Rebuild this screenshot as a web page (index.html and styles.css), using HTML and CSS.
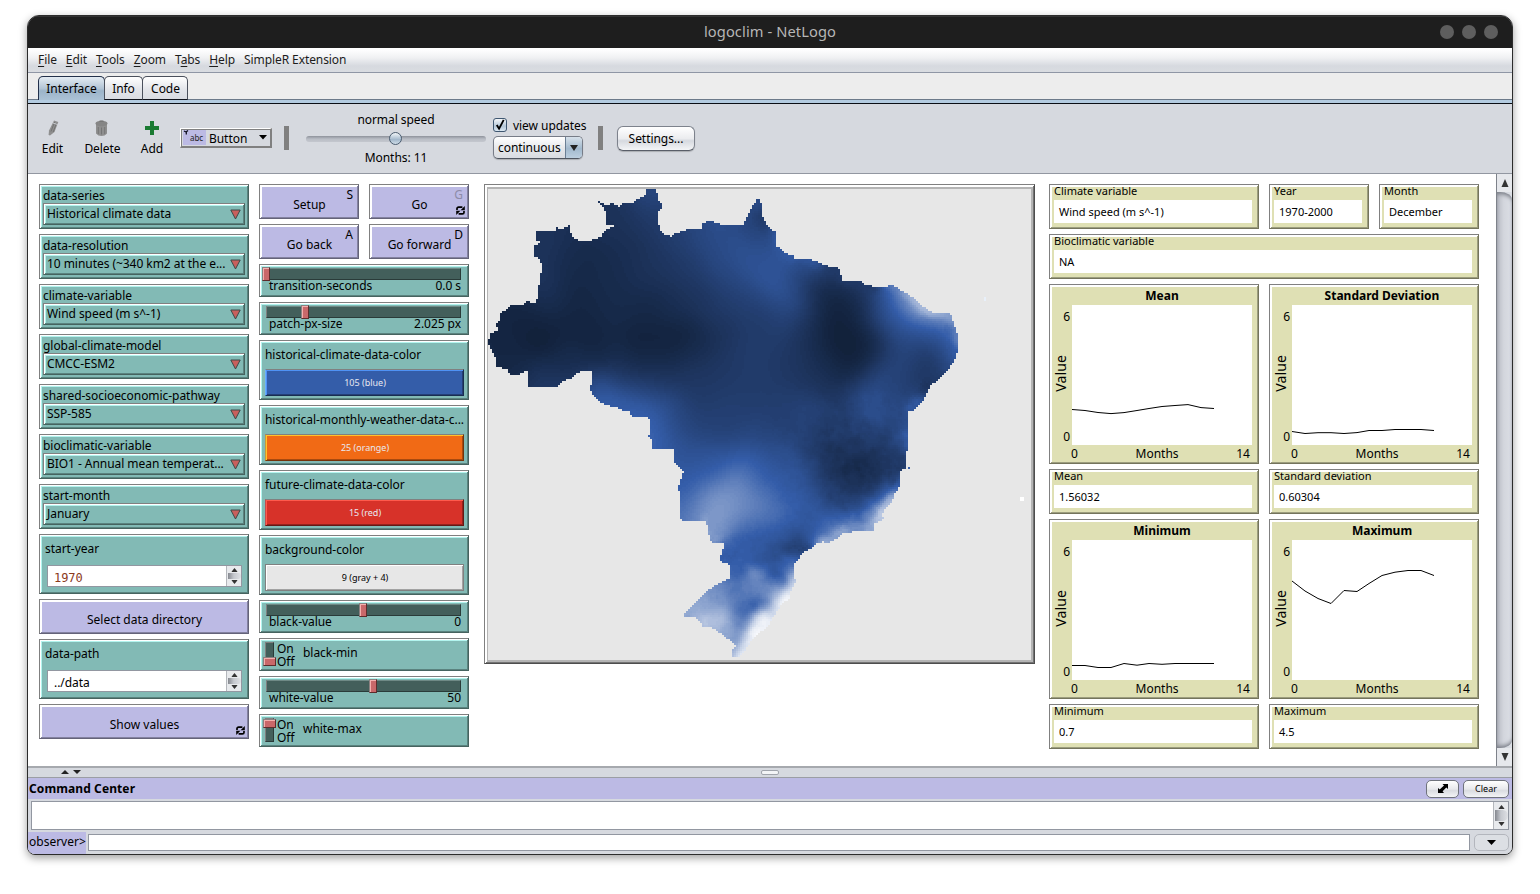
FILE: index.html
```html
<!DOCTYPE html>
<html lang="en">
<head>
<meta charset="utf-8">
<title>logoclim - NetLogo</title>
<link rel="stylesheet" href="styles.css">
</head>
<body>
<svg width="0" height="0" class="defs">
  <symbol id="forever" viewBox="0 0 9 9">
    <path d="M1 4V2.6Q1 1.2 2.6 1.2H6.4M8 5V6.4Q8 7.8 6.4 7.8H2.6" fill="none" stroke="#000" stroke-width="1.7"/>
    <path d="M8.8 0V4.2H4.6ZM.2 9V4.8H4.4Z" fill="#000"/>
  </symbol>
  <symbol id="tri" viewBox="0 0 11 11"><path d="M.8 1H10.2L5.5 10Z" fill="#c95f5c" stroke="#3c4a48" stroke-width="1"/></symbol>
  <symbol id="up" viewBox="0 0 8 5"><path d="M0 5H8L4 0Z" fill="#333"/></symbol>
  <symbol id="down" viewBox="0 0 8 5"><path d="M0 0H8L4 5Z" fill="#333"/></symbol>
</svg>
<div class="window">
  <header class="titlebar">
    <span class="title">logoclim - NetLogo</span>
    <div class="dots"><i></i><i></i><i></i></div>
  </header>
  <nav class="menubar">
    <span><u>F</u>ile</span><span><u>E</u>dit</span><span><u>T</u>ools</span><span><u>Z</u>oom</span><span>T<u>a</u>bs</span><span><u>H</u>elp</span><span>SimpleR Extension</span>
  </nav>
  <div class="tabs"><span class="tab active">Interface</span><span class="tab t-info">Info</span><span class="tab t-code">Code</span></div>
  <div class="tabline"></div>
  <div class="toolbar">
    <div class="tool tool-edit">
      <svg width="16" height="18" viewBox="0 0 16 18"><path d="M9 1.500 13.300 3 9.500 13 5 16.500 3.600 16 4 11.500Z" fill="#8f8f8f"/><path d="M9.600 3 6 12.500M11.500 4 8.200 13" stroke="#737373" stroke-width="1" fill="none"/><path d="M8 4 12.600 5.500" stroke="#d6d9df" stroke-width=".8"/></svg>
      <span>Edit</span>
    </div>
    <div class="tool tool-delete">
      <svg width="18" height="18" viewBox="0 0 18 18"><path d="M2 5H13V14.500Q11 17 7.500 17T2 14.500Z" fill="#8f8f8f"/><ellipse cx="7.500" cy="4.500" rx="6" ry="2.700" fill="#858585"/><path d="M5.500 1.500H9.500V3H5.500Z" fill="#777"/><path d="M4.300 8V15M7.500 8.500V15.500M10.700 8V15" stroke="#757575" fill="none"/></svg>
      <span>Delete</span>
    </div>
    <div class="tool tool-add">
      <svg width="16" height="18" viewBox="0 0 16 18"><path d="M6 2H10V7H15V11H10V16H6V11H1V7H6Z" fill="#1a7a32"/></svg>
      <span>Add</span>
    </div>
    <div class="picker">
      <span class="chip"><svg width="7" height="5" viewBox="0 0 7 5"><path d="M1 1 3 2 5 .5M3.300 2V4.500" stroke="#112" stroke-width="1.300" fill="none"/></svg>abc</span>
      <span class="pick-name">Button</span>
      <svg class="pick-arrow" width="8" height="5" viewBox="0 0 8 5"><path d="M0 0H8L4 4.500Z" fill="#000"/></svg>
    </div>
    <div class="sep sep1"></div>
    <div class="speed">
      <span>normal speed</span>
      <div class="speed-track"><i></i></div>
      <span class="ticks">Months: 11</span>
    </div>
    <div class="updates">
      <div class="check-row"><span class="check"><svg width="12" height="12" viewBox="0 0 13 13"><path d="M3 6.500 5.500 10.500 10.500 1" fill="none" stroke="#000" stroke-width="2"/></svg></span><span>view updates</span></div>
      <div class="combo"><span>continuous</span><span class="combo-btn"><svg width="8" height="6" viewBox="0 0 8 5" preserveAspectRatio="none"><path d="M0 0H8L4 5Z" fill="#222"/></svg></span></div>
    </div>
    <div class="sep sep2"></div>
    <div class="settings">Settings...</div>
  </div>

  <main class="stage">
    <div class="col col-a">
      <div class="w teal chooser"><label>data-series</label><div class="select">Historical climate data<svg width="11" height="11"><use href="#tri"/></svg></div></div>
      <div class="w teal chooser"><label>data-resolution</label><div class="select">10 minutes (~340 km2 at the e...<svg width="11" height="11"><use href="#tri"/></svg></div></div>
      <div class="w teal chooser"><label>climate-variable</label><div class="select">Wind speed (m s^-1)<svg width="11" height="11"><use href="#tri"/></svg></div></div>
      <div class="w teal chooser"><label>global-climate-model</label><div class="select">CMCC-ESM2<svg width="11" height="11"><use href="#tri"/></svg></div></div>
      <div class="w teal chooser"><label>shared-socioeconomic-pathway</label><div class="select">SSP-585<svg width="11" height="11"><use href="#tri"/></svg></div></div>
      <div class="w teal chooser"><label>bioclimatic-variable</label><div class="select">BIO1 - Annual mean temperat...<svg width="11" height="11"><use href="#tri"/></svg></div></div>
      <div class="w teal chooser"><label>start-month</label><div class="select">January<svg width="11" height="11"><use href="#tri"/></svg></div></div>
      <div class="w teal input"><label>start-year</label><div class="field"><span class="num">1970</span><span class="mini"><svg width="7" height="4" viewBox="0 0 8 5"><use href="#up"/></svg><b></b><svg width="7" height="4" viewBox="0 0 8 5"><use href="#down"/></svg></span></div></div>
      <div class="w lilac button">Select data directory</div>
      <div class="w teal input"><label>data-path</label><div class="field"><span>../data</span><span class="mini"><svg width="7" height="4" viewBox="0 0 8 5"><use href="#up"/></svg><b></b><svg width="7" height="4" viewBox="0 0 8 5"><use href="#down"/></svg></span></div></div>
      <div class="w lilac button">Show values<svg class="loop" width="9" height="9"><use href="#forever"/></svg></div>
    </div>

    <div class="col col-b">
      <div class="pair">
        <div class="w lilac button">Setup<b class="key">S</b></div>
        <div class="w lilac button">Go<b class="key dim">G</b><svg class="loop" width="9" height="9"><use href="#forever"/></svg></div>
      </div>
      <div class="pair">
        <div class="w lilac button">Go back<b class="key">A</b></div>
        <div class="w lilac button">Go forward<b class="key">D</b></div>
      </div>
      <div class="w teal slider"><div class="track"><i style="left:-5px"></i></div><div class="sl"><span>transition-seconds</span><span>0.0 s</span></div></div>
      <div class="w teal slider"><div class="track"><i style="left:34px"></i></div><div class="sl"><span>patch-px-size</span><span>2.025 px</span></div></div>
      <div class="w teal color"><label>historical-climate-data-color</label><div class="swatch blue">105 (blue)</div></div>
      <div class="w teal color"><label>historical-monthly-weather-data-c...</label><div class="swatch orange">25 (orange)</div></div>
      <div class="w teal color"><label>future-climate-data-color</label><div class="swatch red">15 (red)</div></div>
      <div class="w teal color"><label>background-color</label><div class="swatch gray">9 (gray + 4)</div></div>
      <div class="w teal slider"><div class="track"><i style="left:92px"></i></div><div class="sl"><span>black-value</span><span>0</span></div></div>
      <div class="w teal switch off"><div class="chan"><i></i></div><div class="onoff"><span>On</span><span>Off</span></div><span class="name">black-min</span></div>
      <div class="w teal slider"><div class="track"><i style="left:102px"></i></div><div class="sl"><span>white-value</span><span>50</span></div></div>
      <div class="w teal switch"><div class="chan"><i></i></div><div class="onoff"><span>On</span><span>Off</span></div><span class="name">white-max</span></div>
    </div>

    <div class="view"><div class="world"><canvas id="world" width="272" height="236"></canvas></div></div>

    <div class="col col-c">
      <div class="grid3">
        <div class="w sand monitor"><label>Climate variable</label><div class="val">Wind speed (m s^-1)</div></div>
        <div class="w sand monitor"><label>Year</label><div class="val">1970-2000</div></div>
        <div class="w sand monitor"><label>Month</label><div class="val">December</div></div>
      </div>
      <div class="w sand monitor"><label>Bioclimatic variable</label><div class="val">NA</div></div>
      <div class="grid2">
        <div class="w sand plot"><h4>Mean</h4><div class="yax"><span>6</span><em>Value</em><span>0</span></div><svg class="area" width="180" height="140"><polyline points="0,104.500 13,105.500 26,107.500 39,108.600 52,107.600 65,105.500 77,103.500 90,101.500 103,100.500 116,99.600 129,102.600 142,103.500"/></svg><div class="xax"><span>0</span><span>Months</span><span>14</span></div></div>
        <div class="w sand plot"><h4>Standard Deviation</h4><div class="yax"><span>6</span><em>Value</em><span>0</span></div><svg class="area" width="180" height="140"><polyline points="0,126.500 13,128.500 26,127.700 39,127.700 52,128.500 65,127.600 77,125.500 90,125.500 103,124.500 116,124.500 129,124.500 142,125.500"/></svg><div class="xax"><span>0</span><span>Months</span><span>14</span></div></div>
      </div>
      <div class="grid2">
        <div class="w sand monitor"><label>Mean</label><div class="val">1.56032</div></div>
        <div class="w sand monitor"><label>Standard deviation</label><div class="val">0.60304</div></div>
      </div>
      <div class="grid2">
        <div class="w sand plot"><h4>Minimum</h4><div class="yax"><span>6</span><em>Value</em><span>0</span></div><svg class="area" width="180" height="140"><polyline points="0,125.500 13,125.500 26,127.500 39,127.500 52,123.500 65,125.200 77,123.500 90,124.300 103,123.500 116,123.500 129,123.500 142,123.500"/></svg><div class="xax"><span>0</span><span>Months</span><span>14</span></div></div>
        <div class="w sand plot"><h4>Maximum</h4><div class="yax"><span>6</span><em>Value</em><span>0</span></div><svg class="area" width="180" height="140"><polyline points="0,41 13,51 26,58.500 39,63.500 52,50.500 65,51.500 77,43.500 90,35.500 103,32.200 116,30.500 129,30.500 142,35.500"/></svg><div class="xax"><span>0</span><span>Months</span><span>14</span></div></div>
      </div>
      <div class="grid2">
        <div class="w sand monitor"><label>Minimum</label><div class="val">0.7</div></div>
        <div class="w sand monitor"><label>Maximum</label><div class="val">4.5</div></div>
      </div>
    </div>

    <div class="vscroll">
      <span class="vs-btn"><svg width="8" height="8" viewBox="0 0 8 8"><path d="M.5 8H7.500L4 0Z" fill="#333"/></svg></span>
      <span class="vs-thumb"></span>
      <span class="vs-btn"><svg width="8" height="8" viewBox="0 0 8 8"><path d="M.5 0H7.500L4 8Z" fill="#333"/></svg></span>
    </div>
  </main>

  <div class="splitter"><svg width="8" height="4" viewBox="0 0 8 5" preserveAspectRatio="none"><path d="M0 5H8L4 0Z" fill="#222"/></svg><svg width="8" height="4" viewBox="0 0 8 5" preserveAspectRatio="none"><path d="M0 0H8L4 5Z" fill="#222"/></svg><i></i></div>
  <section class="cc">
    <div class="cc-head"><strong>Command Center</strong>
      <span class="pill p-icon"><svg width="10" height="9" viewBox="0 0 10 9"><path d="M4.500 0H10V5L8.300 3.600 4.600 7.300 6 9H0V4L1.700 5.400 6 1.500Z" fill="#000"/></svg></span>
      <span class="pill p-clear">Clear</span>
    </div>
    <div class="out"><span class="mini tall"><svg width="7" height="4" viewBox="0 0 8 5"><use href="#up"/></svg><b></b><svg width="7" height="4" viewBox="0 0 8 5"><use href="#down"/></svg></span></div>
    <div class="prompt"><span class="who">observer&gt;</span><span class="line"></span><span class="hist"><svg width="9" height="5" viewBox="0 0 9 5"><path d="M0 0H9L4.500 5Z" fill="#000"/></svg></span></div>
  </section>
</div>
<script src="world.js"></script>
</body>
</html>
```

FILE: styles.css
```css
* { box-sizing: border-box; }
body { margin: 0; background: #fff; font-family: "Noto Sans", sans-serif; font-size: 12px; line-height: 16px; letter-spacing: -.05px; color: #000; height: 894px; overflow: hidden; }
.defs { position: absolute; }
i, em, b { font-style: normal; font-weight: normal; }
svg { display: block; }

.window { width: 1486px; height: 840px; margin: 15px 0 0 27px; border: 1px solid #2c2c2c; border-radius: 12px 12px 8px 8px; background: #d6d9df; overflow: hidden; display: flex; flex-direction: column; box-shadow: 0 3px 9px rgba(0,0,0,.38); }
.titlebar { height: 32px; flex: none; background: #1e1e1e; display: flex; align-items: center; justify-content: center; position: relative; padding-bottom: 2px; box-shadow: inset 0 1px #333; }
.title { color: #b6b6b6; font-size: 14.67px; letter-spacing: .1px; }
.dots { position: absolute; right: 14px; top: 9px; display: flex; gap: 8px; }
.dots i { width: 14px; height: 14px; border-radius: 50%; background: #5e5e5e; }

.menubar { height: 25px; flex: none; display: flex; gap: 9px; padding: 4px 0 0 10px; background: linear-gradient(#fff 5%, #f0f1f3 40%, #d6d9df 75%, #d9dce1); border-bottom: 1px solid #8f96a5; color: #1c1c1c; letter-spacing: -.09px; }
.menubar u { text-decoration: underline; text-underline-offset: 2px; }
.tabs { height: 26px; flex: none; background: #ededed; display: flex; padding: 3px 0 0 10px; }
.tab { height: 24px; border: 1px solid #4a505c; border-bottom-color: #10131c; border-radius: 5px 5px 0 0; background: linear-gradient(#fff, #e3e5ea 55%, #d9dce2); text-align: center; line-height: 24px; margin-right: -1px; position: relative; width: 40px; }
.tab.active { width: 67px; background: linear-gradient(#e4ecf3, #b2c4d5 50%, #9cb4c9 60%, #abc2d6); border-color: #22304a; border-bottom: 0; }
.t-info { width: 39px; }
.t-code { width: 46px; padding-left: 1px; }
.tabline { height: 5px; flex: none; background: #b3cbe0; border-top: 1px solid #6c7a8a; border-bottom: 1px solid #0a0d14; }

.toolbar { height: 70px; flex: none; background: #d6d9df; border-bottom: 1px solid #9297a1; display: flex; align-items: flex-start; padding: 0 0 0 3px; margin-bottom: -1px; }
.tool { display: flex; flex-direction: column; align-items: center; padding-top: 15px; gap: 4px; }
.tool-edit { width: 43px; }
.tool-delete { width: 57px; }
.tool-add { width: 42px; }
.picker { margin: 24px 0 0 7px; width: 92px; height: 20px; border: 1px solid #fff; border-bottom: 2px solid #808080; border-right: 2px solid #808080; box-shadow: inset 1px 1px #808080; display: flex; align-items: center; padding-left: 2px; gap: 3px; }
.pick-name { padding-top: 2px; }
.chip { width: 23px; height: 15px; background: #bcbae4; font-size: 8px; line-height: 16px; padding-left: 7px; position: relative; color: #222; }
.chip svg { position: absolute; left: 0; top: 0; }
.pick-arrow { margin-left: 9px; }
.sep { width: 5px; height: 24px; background: #808080; margin-top: 22px; }
.sep1 { margin-left: 12px; }
.sep2 { margin-left: 15px; }
.speed { width: 180px; margin: 8px 0 0 17px; display: flex; flex-direction: column; align-items: center; }
.speed-track { width: 180px; height: 6px; border-radius: 3px; background: linear-gradient(#8e929b, #b9bdc5 50%, #c4c7ce); margin: 8px 0; position: relative; }
.speed-track i { position: absolute; left: 83px; top: -4px; width: 13px; height: 13px; border-radius: 50%; border: 1px solid #4a5c70; background: linear-gradient(#f2f6f9, #a3b8cc 60%, #d0dde8); }
.updates { margin: 14px 0 0 7px; width: 90px; }
.check-row { display: flex; gap: 6px; height: 14px; line-height: 16px; white-space: nowrap; }
.check { width: 14px; height: 14px; border: 1px solid #3e5670; border-radius: 3px; background: linear-gradient(#f6f8fa, #b4c7d8 60%, #dce8f2); flex: none; }
.combo { margin-top: 4px; width: 90px; height: 23px; border: 1px solid #777c87; border-bottom-color: #4f555f; border-radius: 5px; background: linear-gradient(#fff, #e7e9ec 50%, #d9dce1); display: flex; overflow: hidden; line-height: 22px; padding-left: 4px; box-shadow: 0 1px 1px rgba(0,0,0,.2); }
.combo-btn { margin-left: auto; width: 17px; background: linear-gradient(#d6e1ea, #a2b9cd 55%, #bccfdf); border-left: 1px solid #6b7f94; display: flex; align-items: center; justify-content: center; }
.settings { margin: 22px 0 0 14px; width: 78px; height: 25px; border: 1px solid #7d828c; border-bottom-color: #595e68; border-radius: 6px; background: linear-gradient(#fff, #ebecef 50%, #d6d9df 60%, #f4f5f7); text-align: center; line-height: 24px; box-shadow: 0 1px 1px rgba(0,0,0,.2); }

.stage { height: 593px; flex: none; background: #fff; display: flex; align-items: flex-start; padding-left: 11px; border-top: 1px solid #9297a1; }
.col { display: flex; flex-direction: column; gap: 5px; padding-top: 10px; flex: none; }
.col-a, .col-b { width: 210px; }
.col-b { margin-left: 10px; }
.col-c { width: 430px; margin-left: 14px; }
.pair, .grid3, .grid2 { display: grid; gap: 10px; grid-template-columns: 1fr 1fr; }
.grid3 { grid-template-columns: 210px 100px 100px; }

.w { border: 1px solid; position: relative; white-space: nowrap; }
.w label { display: block; }
.teal { background: #82bab5; border-color: #808080 #46635f #46635f #808080; box-shadow: inset 1px 1px #fff, inset -1px -1px #5b837f, inset 2px 2px #b2f4ee; }
.lilac { background: #bcbae4; border-color: #808080 #646379 #646379 #808080; box-shadow: inset 1px 1px #fff, inset -1px -1px #8382a0, inset 2px 2px #fff; }
.sand { background: #dfe0b4; border-color: #808080 #74745c #74745c #808080; box-shadow: inset 1px 1px #fff, inset -1px -1px #9c9d7e, inset 2px 2px #fff; }

.chooser { height: 45px; padding: 3px 3px 0; }
.chooser label { height: 15px; line-height: 16px; }
.select { height: 22px; border: 1px solid; border-color: #808080 #46635f #46635f #808080; box-shadow: inset 1px 1px #fff, inset -1px -1px #5b837f, inset 2px 2px #b2f4ee; line-height: 20px; padding-left: 3px; position: relative; }
.select svg { position: absolute; right: 3px; top: 5px; }
.input { height: 60px; padding: 6px 6px 0 7px; }
.input label { margin-left: -2px; height: 24px; }
.field { height: 22px; width: 195px; border: 1px solid #9297a1; background: #fff; display: flex; line-height: 24px; padding-left: 6px; }
.num { font-family: "DejaVu Sans Mono", monospace; color: #8b3a1c; }
.mini { margin-left: auto; width: 15px; display: flex; flex-direction: column; justify-content: space-between; align-items: center; padding: 2px 0 2px; background: #e8eaed; border-left: 1px solid #b4b7bc; }
.mini b { width: 13px; flex: 1; margin: 1px 0; border-radius: 0 6px 6px 0; background: linear-gradient(90deg, #85888f, #c6c9cf 45%, #dfe1e5); }
.button { height: 35px; text-align: center; line-height: 40px; padding-left: 1px; letter-spacing: 0; }
.key { position: absolute; right: 5px; top: 2px; line-height: 16px; }
.dim { color: #8d8ca8; }
.loop { position: absolute; right: 3px; bottom: 3px; }
.slider { height: 33px; padding: 3px 6px 0; }
.track { height: 12px; width: 195px; background: #435f5b; border: 1px solid; border-color: #6f8a86 #2a3b39 #2a3b39 #808080; position: relative; }
.track i { position: absolute; top: -2px; width: 8px; height: 14px; }
.track i, .chan i { background: #c9686a; border: 1px solid; border-color: #8a8080 #5e2c2c #5e2c2c #8a8080; box-shadow: inset 1px 1px #f3b0ae; }
.sl { display: flex; justify-content: space-between; padding: 0 1px 0 3px; line-height: 16px; margin-top: -2px; }
.color { height: 60px; padding: 6px 4px 0 5px; }
.color label { height: 22px; }
.swatch { height: 27px; width: 199px; border: 1px solid; font-size: 9px; color: #e8e8f0; text-align: center; line-height: 26px; letter-spacing: 0; padding-left: 1px; }
.blue { background: #345da9; border-color: #808080 #182c50 #182c50 #6ab0ff; box-shadow: inset 1px 1px #4f92f5, inset -1px -1px #243f75; }
.orange { background: #f16a15; border-color: #808080 #74330a #74330a #c79a3a; box-shadow: inset 1px 1px #ffc32c, inset -1px -1px #a84a0f; }
.red { background: #d73229; border-color: #808080 #651814 #651814 #c05050; box-shadow: inset 1px 1px #ff5a4c, inset -1px -1px #95231d; }
.gray { background: #e7e7e7; border-color: #808080 #808080 #808080 #808080; color: #000; box-shadow: inset 1px 1px #fff, inset -1px -1px #a2a2a2; }
.switch { height: 33px; display: flex; padding-left: 5px; }
.chan { width: 9px; height: 24px; margin-top: 3px; background: #435f5b; border: 1px solid; border-color: #808080 #2a3b39 #2a3b39 #808080; position: relative; }
.chan i { position: absolute; left: -3px; width: 13px; height: 9px; top: 0; }
.off .chan i { top: 14px; }
.onoff { display: flex; flex-direction: column; margin-left: 3px; width: 26px; line-height: 13px; padding-top: 3px; letter-spacing: 0; }
.name { line-height: 28px; }

.view { margin: 10px 0 0 15px; width: 551px; height: 480px; border: 1px solid; border-color: #808080 #4d4d4d #4d4d4d #808080; box-shadow: inset 1px 1px #fff, inset -1px -1px #737373, inset 2px 2px #fff; padding: 2px 2px; flex: none; }
.world { width: 546px; height: 475px; border: 2px solid #b4b4b4; border-left-width: 1px; background: #e7e7e7; overflow: hidden; }
.world canvas { display: block; width: 544px; height: 472px; image-rendering: pixelated; }

.monitor { height: 45px; padding: 0 4px; font-size: 11px; letter-spacing: 0; }
.monitor label { height: 15px; line-height: 12px; }
.val { background: #fff; height: 23px; margin-right: 2px; line-height: 23px; padding-left: 5px; }
.plot { height: 180px; display: grid; grid-template: 20px 140px 1fr / 22px 180px; }
.plot h4 { margin: 0; grid-column: 2; text-align: center; font-size: 12px; line-height: 21px; font-weight: bold; letter-spacing: 0; }
.yax { position: relative; display: flex; flex-direction: column; justify-content: space-between; align-items: flex-end; padding: 4px 2px 0 0; }
.yax em { writing-mode: vertical-rl; transform: rotate(180deg); position: absolute; left: 3px; top: 50px; font-size: 14px; letter-spacing: .1px; }
.area { background: #fff; }
.area polyline { fill: none; stroke: #000; stroke-width: 1; }
.xax { grid-column: 2; display: flex; justify-content: space-between; padding: 1px 2px 0 0; line-height: 16px; margin-left: -1px; letter-spacing: 0; }

.vscroll { margin-left: 17px; width: 16px; height: 592px; border-left: 1px solid #7e828a; background: linear-gradient(90deg, #b4b7be, #d3d6dd 50%, #dde0e6); display: flex; flex-direction: column; }
.vs-btn { height: 18px; background: #e6e8ec; display: flex; align-items: center; justify-content: center; flex: none; }
.vs-thumb { flex: 1; border-radius: 0 12px 12px 0 / 0 8px 8px 0; box-shadow: inset 0 4px 4px -2px #777b84, inset 0 -4px 4px -2px #777b84; background: linear-gradient(90deg, #b8bbc3, #d3d6dd 45%, #dcdfe5); }

.splitter { height: 12px; flex: none; background: #d6d9df; border-top: 2px solid #a6a9ae; border-bottom: 1px solid #9b9ea4; display: flex; gap: 4px; padding: 2px 0 0 33px; position: relative; }
.splitter i { width: 18px; height: 5px; border: 1px solid #a0a4ac; border-radius: 2px; background: #f3f4f6; margin-left: 676px; }
.cc { flex: 1; display: flex; flex-direction: column; background: #d6d9df; }
.cc-head { height: 21px; background: #bcbae4; display: flex; align-items: center; padding: 0 3px 0 1px; flex: none; }
.cc-head strong { margin-right: auto; letter-spacing: .1px; }
.pill { height: 18px; border: 1px solid #6f737c; border-radius: 5px; background: linear-gradient(#fff, #e8e9ec 50%, #dadce1 60%, #f3f4f6); display: flex; align-items: center; justify-content: center; font-size: 9px; letter-spacing: 0; }
.p-icon { width: 33px; margin-right: 4px; }
.p-clear { width: 46px; }
.out { height: 29px; flex: none; margin: 2px 3px 0; background: #fff; border: 1px solid #9297a1; display: flex; }
.tall { padding: 3px 0; }
.prompt { display: flex; padding-top: 3px; flex: 1; }
.who { width: 58px; height: 22px; margin-top: -1px; background: #bcbae4; line-height: 20px; padding-left: 1px; letter-spacing: 0; }
.line { width: 1382px; height: 17px; margin: 1px 0 0 2px; background: #fff; border: 1px solid #9297a1; }
.hist { width: 35px; height: 17px; margin: 1px 0 0 4px; border: 1px solid #b3b6bd; border-radius: 5px; background: #dcdfe4; display: flex; align-items: center; justify-content: center; }
```

FILE: world.js
```js
// Patch grid: each patch is 2px, the world origin sits at (488, 189).
const OX = 488, OY = 189, CELL = 2, COLS = 272, ROWS = 236;

const outline = [
646,189,656,189,658,195,658,200,661.5,203,661,210,658.5,212,658.5,223,661,230,662.5,232.5,666.5,235,671.5,236.5,674.5,234,
681.5,231.5,690.5,228,701.5,228.5,702.5,222.5,710,221.5,717.5,222.5,721.5,224.5,730,224.5,743.5,224.5,745.5,219.5,748.5,213.5,
751.5,207.5,755,202.5,756.5,199,759.5,200,762,205,763,216,765,220,767,224.5,772,230,776.5,231.5,776.5,241.5,775,246.5,782,248.5,
784,253,794,255,795.5,260.5,798.5,259,808.5,259,816.5,261.5,823.5,264.5,830,267,837.5,268,840,270.5,842.5,280,849,280.5,861.5,281.5,
865,285,875,286.5,886.5,287,887.5,285.5,895,286,900,289.5,906.5,293.5,913.5,298,921.5,305,932.5,312.5,934,313.5,950,313.5,951.5,316.5,
954,323.5,956,330,958.5,336,958.5,346.5,956.5,355,953.5,363,946.5,371,938.5,380,931.5,385,927.5,393,925,398,920,404,914.5,410,
909,410.5,909,425,907.5,433,909,436,909,448,906.5,452,906,465,905,469,900,471.5,899,488,895,494,891.5,501.5,886.5,507.5,881.5,515,
884,519,875,523,873,531,863.5,530.5,855,531.5,843,534,835,540,826.5,543,823.5,541,816.5,544,810,549,802.5,553,800,557,793.5,564,
793,577,796,581,793,587,790.5,593,790,599,783.5,601.5,776.5,612,771.5,620,766,629,760,632.5,751.5,640,746.5,648.5,740,656,
732.5,657.5,732.5,650,735.5,646.5,731.5,641,726.5,638,721.5,633,716.5,631,710,626.5,702.5,627.5,700.5,621.5,693.5,616.5,684,617.5,
684.5,614,693.5,605,701.5,596.5,710,589,718.5,583.5,730,578,730,565.5,727.5,562.5,723.5,563.5,720.5,561.5,720.5,556,722.5,554,
723.5,543.5,713,543,710,540.5,708,530,706.5,522,685,521.5,679,519,680,501.5,678.5,486.5,681,478.5,683.5,470.5,676.5,464.5,674,461.5,
674,450,652.5,450,651.5,440,648.5,436,651,432.5,650,418.5,643.5,417,631.5,416,629.5,412,623.5,410.5,613.5,406.5,605,405,598.5,400.5,
593.5,395,590.5,390,591.5,381.5,591.5,371.5,583.5,371,575.5,374,570,379,561.5,381.5,557.5,387,546,386.5,528.5,387,528,370,519.5,374,
510,374.5,507.5,369.5,496.5,366,495,356.5,491.5,350.5,488,343.5,490,333.5,497.5,331,496.5,323.5,500,320,500,313.5,506,310,511.5,305.5,
524.5,304.5,526.5,301.5,535.5,302.5,538.5,295,539,285.5,540.5,275,542.5,268.5,540.5,260,535,256.5,534.5,245.5,543.5,242.5,536,241,
536,231,556,230.5,556.5,227.5,561.5,229,569.5,225.5,570,230.5,572.5,236.5,580,242,591.5,240.5,600,237.5,606.5,229.5,614,226,606,224.5,
606,213.5,604,207.5,598.5,203.5,599,201,605,204.5,613.5,203.5,619.5,206.5,622.5,203.5,633.5,202.5,640,197.5,646,195];

// Wind samples: x, y, shade (0 black, 1 base blue, 2 white).
const samples = [
650,195,.75,650,215,.6,620,212,.52,612,230,.5,590,260,.42,560,260,.46,545,250,.54,545,280,.54,548,300,.48,575,285,.4,580,310,.38,
560,325,.37,530,320,.36,505,330,.37,540,340,.3,500,350,.38,493,345,.4,515,365,.4,540,380,.55,555,384,.62,560,370,.44,580,365,.48,
600,360,.4,590,340,.35,640,340,.34,670,340,.34,690,335,.38,650,310,.4,620,290,.44,605,260,.44,630,250,.49,640,280,.5,620,305,.43,
660,260,.55,680,240,.65,690,270,.6,700,300,.54,670,300,.48,700,235,.75,715,230,.82,720,260,.78,740,235,.82,745,250,.88,750,270,.88,
730,285,.7,770,280,.92,780,285,.92,790,300,.82,785,320,.7,760,215,.62,755,205,.8,758,225,.62,765,240,.72,775,240,.95,770,262,.88,
790,256,.95,800,275,.65,810,262,.9,820,290,.42,840,295,.33,835,270,.6,845,283,.6,870,292,.6,860,305,.42,840,320,.32,840,340,.3,860,340,.32,
830,330,.34,850,355,.31,875,340,.42,855,365,.37,840,380,.42,820,350,.42,805,330,.52,800,360,.55,815,375,.5,885,300,.85,895,288,1.2,900,305,1.05,
905,310,1.1,915,300,1.6,908,295,1.5,923,307,1.6,930,312,1.6,942,314,1.5,950,315,1.4,925,325,.9,940,330,.85,945,345,.8,957,340,1.25,
955,355,.95,900,330,.85,890,320,.85,910,345,.72,930,360,.5,945,365,.75,935,375,.6,905,370,.7,920,385,.5,900,395,.6,918,403,.9,
910,405,.95,890,380,.75,880,395,.85,870,395,.78,875,410,.97,865,400,.85,895,410,.65,905,420,.85,907,440,1,
720,330,.52,700,350,.46,670,360,.42,640,365,.42,620,380,.58,600,385,.88,605,398,1.02,620,400,1,640,410,1.04,650,425,1.04,660,405,.88,
640,390,.72,660,385,.58,690,375,.56,700,400,.6,680,420,.75,720,370,.58,750,350,.62,770,340,.62,760,320,.62,750,300,.68,720,310,.6,
760,380,.62,750,400,.63,780,400,.64,790,380,.58,730,430,.65,700,430,.68,770,430,.66,800,410,.7,810,420,.75,830,400,.6,850,410,.65,
840,420,.62,825,430,.62,800,430,.66,655,442,1.08,670,440,.88,690,450,.86,685,490,.97,685,515,1.12,700,505,1.25,720,500,1.4,
735,480,1.3,740,505,1.32,715,530,1.42,710,515,1.42,760,500,1.2,770,515,1.18,790,510,1.04,740,455,.97,745,470,1.13,720,470,1,
710,460,.92,760,470,.97,780,485,.97,800,500,.95,780,450,.84,800,470,.88,730,440,.74,760,435,.75,820,440,.57,840,455,.46,850,480,.46,
860,475,.42,845,470,.44,825,460,.54,880,460,.48,870,440,.6,880,425,.75,890,440,.6,895,460,.58,890,480,.58,875,490,.5,835,500,.62,
830,515,.88,860,510,.78,850,500,.65,815,515,.98,897,487,1,893,500,1.6,885,514,1.7,882,520,1.7,870,527,1.45,855,527,1.25,840,532,1.45,
825,542,1.5,820,528,.95,800,545,.6,790,549,.56,805,532,.85,775,554,.8,785,560,.95,790,560,1.1,760,540,.95,740,545,.97,730,555,.97,
785,535,.95,740,570,1,760,560,.9,775,575,.85,785,580,1,793,580,1.75,791,592,1.9,785,600,2,770,580,1.1,765,585,1.25,775,590,1.4,755,575,1.3,
750,590,1.2,735,590,1.15,755,605,.95,745,612,1.05,720,595,1.3,710,605,1.4,700,612,1.5,690,614,1.45,705,620,1.65,720,620,1.6,
730,630,1.45,740,625,1.2,738,640,1.3,735,652,1.45,745,643,1.9,755,633,2,762,618,1.95,764,622,1.9,768,603,1.2,776,605,1.9,740,655,2];

function inside(x, y) {
  let hit = false;
  for (let i = 0, j = outline.length - 2; i < outline.length; j = i, i += 2) {
    const xi = outline[i], yi = outline[i + 1], xj = outline[j], yj = outline[j + 1];
    if ((yi > y) !== (yj > y) && x < (xj - xi) * (y - yi) / (yj - yi) + xi) hit = !hit;
  }
  return hit;
}

function wind(x, y) {
  let sum = 0, total = 0;
  for (let i = 0; i < samples.length; i += 3) {
    const dx = x - samples[i], dy = y - samples[i + 1];
    const w = 1 / Math.pow(dx * dx + dy * dy + 20, 2);
    sum += w * samples[i + 2];
    total += w;
  }
  return sum / total;
}

// Separable gaussian blur over the patch grid, clamped at the edges.
function blur(src, sigma) {
  const r = Math.ceil(sigma * 2.5), kernel = [];
  let norm = 0;
  for (let k = -r; k <= r; k++) { const g = Math.exp(-k * k / (2 * sigma * sigma)); kernel.push(g); norm += g; }
  const pass = (input, horizontal) => {
    const out = new Float32Array(COLS * ROWS);
    for (let y = 0; y < ROWS; y++) for (let x = 0; x < COLS; x++) {
      let s = 0;
      for (let k = -r; k <= r; k++) {
        const xx = horizontal ? Math.min(COLS - 1, Math.max(0, x + k)) : x;
        const yy = horizontal ? y : Math.min(ROWS - 1, Math.max(0, y + k));
        s += input[yy * COLS + xx] * kernel[k + r];
      }
      out[y * COLS + x] = s / norm;
    }
    return out;
  };
  return pass(pass(src, true), false);
}

// Deterministic terrain grain, stronger over the south-eastern highlands.
function hash(x, y) {
  const s = Math.sin(x * 127.1 + y * 311.7) * 43758.5453;
  return s - Math.floor(s);
}
function grain(px, py) {
  const x = px * .8 + py * .6 + 500, y = py * .8 - px * .6 + 500;
  const xi = Math.floor(x), yi = Math.floor(y);
  let fx = x - xi, fy = y - yi;
  fx = fx * fx * (3 - 2 * fx);
  fy = fy * fy * (3 - 2 * fy);
  const a = hash(xi, yi) * (1 - fx) + hash(xi + 1, yi) * fx;
  const b = hash(xi, yi + 1) * (1 - fx) + hash(xi + 1, yi + 1) * fx;
  return a * (1 - fy) + b * fy - .5;
}
const ramp = (v, from, to) => Math.min(1, Math.max(0, (v - from) / (to - from)));

function shade(v) {
  const base = [52, 93, 169];
  if (v > 1) return base.map(c => c + (255 - c) * (v - 1));
  // The darkest patches lean slightly towards slate.
  return [52 * v + 1 * (1 - v), 93 * v + 3 * (1 - v), 169 * v + 3 * (1 - v)];
}

const ctx = document.getElementById('world').getContext('2d');
function patch(cx, cy, rgb) {
  ctx.fillStyle = `rgb(${rgb.map(Math.round).join(',')})`;
  ctx.fillRect(cx, cy, 1, 1);
}

const field = new Float32Array(COLS * ROWS);
for (let cy = 0; cy < ROWS; cy++) for (let cx = 0; cx < COLS; cx++) {
  field[cy * COLS + cx] = wind(OX + (cx + .5) * CELL, OY + (cy + .5) * CELL);
}
const fine = blur(field, 1.8), broad = blur(field, 5);

for (let cy = 0; cy < ROWS; cy++) {
  for (let cx = 0; cx < COLS; cx++) {
    const x = OX + (cx + .5) * CELL, y = OY + (cy + .5) * CELL;
    if (!inside(x, y)) continue;
    const i = cy * COLS + cx;
    // Keep coastal and far-southern detail, smooth the interior.
    let near = ramp(y, 525, 560);
    for (const d of [5, 8, 11]) {
      if (!inside(x + d, y) || !inside(x, y + d) || !inside(x + d * .7, y + d * .7) || !inside(x + d * .7, y - d * .7)) near = Math.max(near, (14 - d) / 9);
    }
    if (x < 700 && y < 560) near = 0;
    let v = fine[i] * near + broad[i] * (1 - near);
    const rough = ramp(x, 750, 850) * ramp(y, 370, 430);
    v += grain(x / 10, y / 10) * .08 * rough + grain(x / 4, y / 4) * .06 * Math.max(rough, .8 * ramp(y, 510, 550));
    v = Math.round(v * 50) / 50;
    patch(cx, cy, shade(Math.max(.24, Math.min(2, v))));
  }
}
patch(210, 139, [52, 93, 169]);
patch(248, 54, [232, 240, 250]);
patch(248, 55, [232, 240, 250]);
for (const [cx, cy] of [[266, 154], [267, 154], [266, 155], [267, 155]]) patch(cx, cy, [255, 255, 255]);
```
